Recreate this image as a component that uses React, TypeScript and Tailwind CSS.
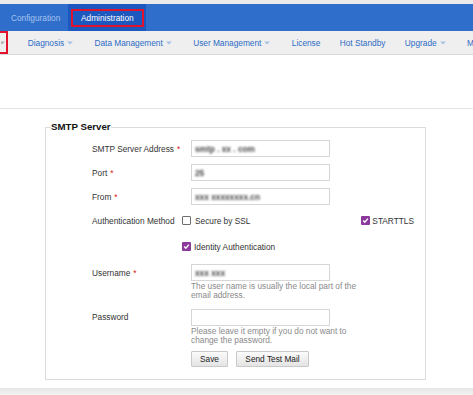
import React from "react";

const Caret = ({ color = "#a9c1e4" }: { color?: string }) => (
  <svg width="6" height="4" viewBox="0 0 6 4" className="ml-[3px] mr-[2px]">
    <path d="M0 0.5 L6 0.5 L3 3.5 Z" fill={color} />
  </svg>
);

const Check = ({ checked }: { checked: boolean }) =>
  checked ? (
    <span className="w-[9px] h-[9px] bg-[#8b3a9c] rounded-[1px] flex items-center justify-center shrink-0">
      <svg width="7" height="7" viewBox="0 0 7 7">
        <path d="M1.2 3.6 L2.8 5.2 L5.9 1.6" stroke="#fff" strokeWidth="1.4" fill="none" />
      </svg>
    </span>
  ) : (
    <span className="w-[9px] h-[9px] border border-[#6f6f6f] rounded-[1px] bg-white shrink-0" />
  );

const Req = () => <span className="text-[#e02020] ml-[3px]">*</span>;

const Input = ({ value }: { value?: string }) => (
  <div className="ml-[9px] w-[139px] h-[17px] border border-[#d6d6d6] bg-white flex items-center px-[3px] overflow-hidden">
    {value ? (
      <span className="text-[#444] font-bold blur-[1px] whitespace-nowrap">{value}</span>
    ) : null}
  </div>
);

export default function App() {
  const navItems: { t: string; c: boolean }[] = [
    { t: "Diagnosis", c: true },
    { t: "Data Management", c: true },
    { t: "User Management", c: true },
    { t: "License", c: false },
    { t: "Hot Standby", c: false },
    { t: "Upgrade", c: true },
    { t: "Maintenance", c: false },
  ];
  return (
    <div
      className="w-[473px] h-[395px] overflow-hidden bg-white flex flex-col text-[8.3px] leading-[10px] text-[#333]"
      style={{ fontFamily: '"Liberation Sans", Arial, sans-serif' }}
    >
      <div className="h-[4px] bg-[#ebebeb] shrink-0" />
      <div className="h-[27px] bg-[#2f6fcb] flex items-stretch shrink-0">
        <div className="pl-[11px] pr-[8px] flex items-center text-[#a6c2ec]">Configuration</div>
        <div className="w-[78px] bg-[#1c58bd] flex items-center justify-center">
          <div className="w-[73px] h-[18px] border-2 border-[#e3132d] flex items-center justify-center text-white">
            Administration
          </div>
        </div>
      </div>
      <div className="h-[24px] bg-[#efefef] border-b border-[#dadada] flex items-center shrink-0 whitespace-nowrap overflow-hidden">
        <div className="w-[8px] h-[23px] border-2 border-l-0 border-[#e3132d] flex items-center overflow-hidden shrink-0">
          <svg width="4" height="4" viewBox="0 0 4 4" className="ml-[1px]">
            <path d="M-2 0.5 L4 0.5 L1 3.5 Z" fill="#b0b0b0" />
          </svg>
        </div>
        <div className="w-[10px] shrink-0" />
        {navItems.map((n) => (
          <div key={n.t} className="px-[9.7px] flex items-center text-[#2c6cc6] shrink-0">
            {n.t}
            {n.c ? <Caret /> : null}
          </div>
        ))}
      </div>
      <div className="h-[54px] border-b border-[#e4e4e4] shrink-0" />
      <div className="flex-1 flex flex-col">
        <fieldset className="ml-[45px] mt-[12px] w-[381px] border border-[#dcdcdc] pb-[12px]">
          <legend className="ml-[5px] text-[9.7px] leading-[12px] font-bold text-[#111]">SMTP Server</legend>
          <div className="flex flex-col pt-[7px] pl-[46px]">
            <div className="flex items-center h-[17px]">
              <div className="w-[90px]">SMTP Server Address<Req /></div>
              <Input value="smtp . xx . com" />
            </div>
            <div className="flex items-center h-[17px] mt-[7px]">
              <div className="w-[90px]">Port<Req /></div>
              <Input value="25" />
            </div>
            <div className="flex items-center h-[17px] mt-[7px]">
              <div className="w-[90px]">From<Req /></div>
              <Input value="xxx  xxxxxxxx.cn" />
            </div>
            <div className="flex items-center h-[17px] mt-[7px]">
              <div className="w-[90px]">Authentication Method</div>
              <div className="w-[232px] flex items-center justify-between">
                <div className="flex items-center gap-[4px]">
                  <Check checked={false} />
                  <span>Secure by SSL</span>
                </div>
                <div className="flex items-center gap-[2px]">
                  <Check checked={true} />
                  <span>STARTTLS</span>
                </div>
              </div>
            </div>
            <div className="flex items-center h-[17px] mt-[9px]">
              <div className="w-[90px]" />
              <div className="flex items-center gap-[3px]">
                <Check checked={true} />
                <span>Identity Authentication</span>
              </div>
            </div>
            <div className="flex items-start mt-[9px]">
              <div className="w-[90px] h-[17px] flex items-center">Username<Req /></div>
              <div className="flex flex-col">
                <Input value="xxx  xxx" />
                <div className="ml-[9px] mt-[1px] text-[#8a8a8a] leading-[9.3px] w-[175px]">
                  The user name is usually the local part of the email address.
                </div>
              </div>
            </div>
            <div className="flex items-start mt-[8px]">
              <div className="w-[90px] h-[17px] flex items-center">Password</div>
              <div className="flex flex-col">
                <Input />
                <div className="ml-[9px] mt-[1px] text-[#8a8a8a] leading-[9.3px] w-[175px]">
                  Please leave it empty if you do not want to change the password.
                </div>
              </div>
            </div>
            <div className="flex items-center mt-[6px] ml-[99px] gap-[8px]">
              <button className="h-[16px] w-[37px] border border-[#c9c9c9] rounded-[1px] bg-gradient-to-b from-[#fbfbfb] to-[#e4e4e4] text-[#222] flex items-center justify-center">
                Save
              </button>
              <button className="h-[16px] w-[73px] border border-[#c9c9c9] rounded-[1px] bg-gradient-to-b from-[#fbfbfb] to-[#e4e4e4] text-[#222] flex items-center justify-center">
                Send Test Mail
              </button>
            </div>
          </div>
        </fieldset>
        <div className="flex-1" />
        <div className="h-[7px] bg-gradient-to-b from-[#e6e6e6] to-[#f2f2f2] shrink-0" />
      </div>
    </div>
  );
}
